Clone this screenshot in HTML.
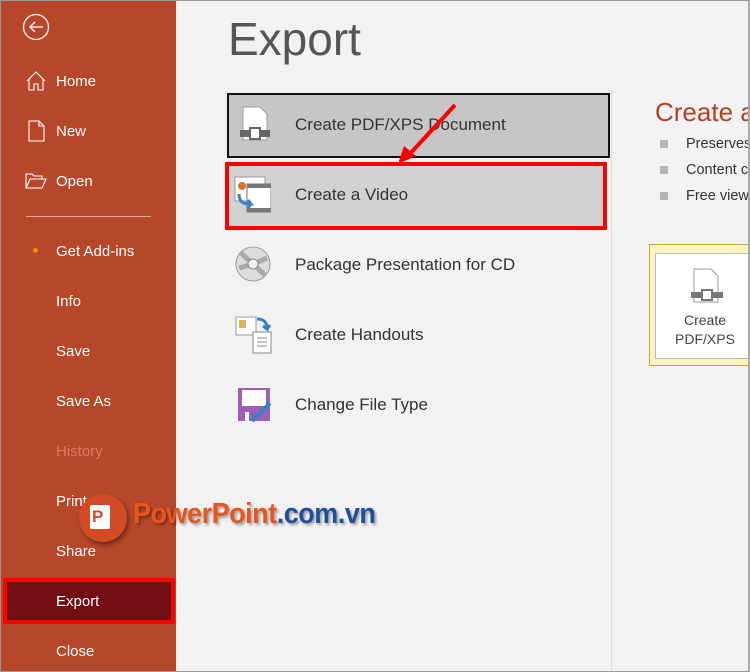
<!DOCTYPE html>
<html><head><meta charset="utf-8"><style>
*{margin:0;padding:0;box-sizing:border-box}
body{width:750px;height:672px;overflow:hidden;background:#f2f2f2;font-family:"Liberation Sans",sans-serif;position:relative}
.frame{position:absolute;left:0;top:0;width:750px;height:672px;border:1px solid #999;border-right:2px solid #aaa;pointer-events:none;z-index:9}
.side{position:absolute;left:0;top:0;width:176px;height:672px;background:#b7472a;color:#fff}
.item{position:absolute;left:56px;font-size:15px;color:#fff}
.ico{position:absolute}
.main{position:absolute;left:176px;top:0;right:0;bottom:0}
.t{position:absolute;font-size:17px;color:#333}
</style></head><body>
<div class="side">
<svg class="ico" style="left:22px;top:13px" width="28" height="28" viewBox="0 0 28 28"><circle cx="14" cy="14" r="12.5" fill="none" stroke="#fff" stroke-width="1.3"/><path d="M8 14h13M13 9l-5 5 5 5" fill="none" stroke="#fff" stroke-width="1.3"/></svg>
<svg class="ico" style="left:26px;top:71px" width="20" height="20" viewBox="0 0 20 20"><path d="M1 10L10 1l9 9M3 8v11h5v-6h4v6h5V8" fill="none" stroke="#fff" stroke-width="1.1"/></svg>
<div class="item" style="top:73px">Home</div>
<svg class="ico" style="left:28px;top:120px" width="17" height="22" viewBox="0 0 17 22"><path d="M1 1h10l5 5v15H1z M11 1v5h5" fill="none" stroke="#fff" stroke-width="1.1"/></svg>
<div class="item" style="top:123px">New</div>
<svg class="ico" style="left:25px;top:173px" width="22" height="16" viewBox="0 0 22 16"><path d="M1 15V1h6l2 2h8v3 M1 15l4-9h16l-4 9z" fill="none" stroke="#fff" stroke-width="1.1"/></svg>
<div class="item" style="top:173px">Open</div>
<div style="position:absolute;left:26px;top:216px;width:125px;height:1px;background:#e8a590"></div>
<div style="position:absolute;left:33px;top:248px;width:5px;height:5px;border-radius:50%;background:#f08a00"></div>
<div class="item" style="top:243px">Get Add-ins</div>
<div class="item" style="top:293px">Info</div>
<div class="item" style="top:343px">Save</div>
<div class="item" style="top:393px">Save As</div>
<div class="item" style="top:443px;color:#db7a63">History</div>
<div class="item" style="top:493px">Print</div>
<div class="item" style="top:543px">Share</div>
<div style="position:absolute;left:3px;top:578px;width:172px;height:46px;background:#730d14;border:4px solid #f00"></div>
<div class="item" style="top:593px">Export</div>
<div class="item" style="top:643px">Close</div>
</div>
<div class="main">
<div style="position:absolute;left:52px;top:12px;font-size:46px;color:#555;font-weight:300">Export</div>
<div style="position:absolute;left:51px;top:93px;width:383px;height:65px;background:#c6c6c6;border:2px solid #111"></div>
<svg class="ico" style="left:64px;top:106px" width="30" height="36" viewBox="0 0 30 36"><path d="M3 1h17l7 7v26H3z" fill="#fff" stroke="#999"/><rect x="0" y="24" width="30" height="7" fill="#666"/><rect x="10" y="22" width="10" height="11" fill="#fff" stroke="#666" stroke-width="2"/></svg>
<div class="t" style="left:119px;top:115px">Create PDF/XPS Document</div>
<div style="position:absolute;left:435px;top:90px;width:1px;height:582px;background:#ddd"></div>
<div style="position:absolute;left:49px;top:162px;width:382px;height:68px;background:#d2d2d2;border:4px solid #f00"></div>
<svg class="ico" style="left:57px;top:176px" width="38" height="38" viewBox="0 0 38 38"><rect x="2" y="1" width="30" height="24" fill="#fff" stroke="#999"/><circle cx="9" cy="10" r="4" fill="#e07030"/><rect x="14" y="8" width="24" height="28" fill="#fff" stroke="#777"/><rect x="14" y="8" width="24" height="4" fill="#777"/><rect x="14" y="32" width="24" height="4" fill="#777"/><path d="M6 18c0 8 4 10 12 10l-3-4m3 4l-3 4" fill="none" stroke="#3b7fc4" stroke-width="3"/></svg>
<div class="t" style="left:119px;top:185px">Create a Video</div>
<svg class="ico" style="left:59px;top:246px" width="36" height="36" viewBox="0 0 36 36"><circle cx="18" cy="18" r="17" fill="#ddd" stroke="#999"/><path d="M18 18L6 7M18 18L30 29M18 18L4 22M18 18l14-6" stroke="#aaa" stroke-width="5"/><circle cx="18" cy="18" r="5" fill="#f2f2f2" stroke="#888"/></svg>
<div class="t" style="left:119px;top:255px">Package Presentation for CD</div>
<svg class="ico" style="left:59px;top:316px" width="38" height="38" viewBox="0 0 38 38"><rect x="1" y="1" width="20" height="18" fill="#fff" stroke="#999"/><rect x="4" y="4" width="7" height="8" fill="#e0b060"/><rect x="18" y="16" width="18" height="21" fill="#fff" stroke="#888"/><path d="M22 22h10M22 26h10M22 30h10" stroke="#888"/><path d="M22 3c8 0 10 4 10 10l-4-3m4 3l3-4" fill="none" stroke="#3b7fc4" stroke-width="3"/></svg>
<div class="t" style="left:119px;top:325px">Create Handouts</div>
<svg class="ico" style="left:61px;top:387px" width="36" height="36" viewBox="0 0 36 36"><rect x="1" y="1" width="32" height="33" fill="#9b5fb8"/><rect x="5" y="3" width="24" height="16" fill="#fff"/><rect x="8" y="25" width="4" height="9" fill="#fff"/><path d="M15 34l18-18" stroke="#3b7fc4" stroke-width="4"/></svg>
<div class="t" style="left:119px;top:395px">Change File Type</div>
<svg style="position:absolute;left:215px;top:102px" width="70" height="64"><path d="M64 3L16 55" stroke="#f00" stroke-width="4"/><path d="M7 62l6-18 12 10z" fill="#f00"/></svg>
<div style="position:absolute;left:479px;top:97px;font-size:26px;color:#b0402a;white-space:nowrap">Create a</div>
<div style="position:absolute;left:484px;top:140px;width:8px;height:8px;background:#b5b5b5"></div>
<div class="t" style="left:510px;top:136px;font-size:14.5px">Preserves</div>
<div style="position:absolute;left:484px;top:166px;width:8px;height:8px;background:#b5b5b5"></div>
<div class="t" style="left:510px;top:162px;font-size:14.5px">Content c</div>
<div style="position:absolute;left:484px;top:192px;width:8px;height:8px;background:#b5b5b5"></div>
<div class="t" style="left:510px;top:188px;font-size:14.5px">Free view</div>
<div style="position:absolute;left:473px;top:244px;width:110px;height:122px;background:#fcf4bf;border:1px solid #c8a830"></div>
<div style="position:absolute;left:479px;top:253px;width:100px;height:106px;background:#fff;border:1px solid #bbb"></div>
<svg class="ico" style="left:515px;top:268px" width="32" height="36" viewBox="0 0 32 36"><path d="M3 1h17l7 7v26H3z" fill="#fff" stroke="#999"/><rect x="0" y="24" width="32" height="6" fill="#777"/><rect x="11" y="22" width="10" height="10" fill="#fff" stroke="#777" stroke-width="2"/></svg>
<div style="position:absolute;left:479px;top:311px;width:100px;text-align:center;font-size:14px;color:#444;line-height:19px">Create<br>PDF/XPS</div>
</div>
<div style="position:absolute;left:79px;top:494px;width:48px;height:48px;border-radius:50%;background:#d24a26;box-shadow:2px 3px 5px rgba(0,0,0,.4)"></div>
<div style="position:absolute;left:90px;top:505px;width:20px;height:24px;background:#fff;border-radius:2px"></div>
<div style="position:absolute;left:92px;top:507px;font-size:17px;font-weight:bold;color:#d24a26">P</div>
<div style="position:absolute;left:133px;top:498px;font-size:29px;font-weight:bold;letter-spacing:-0.5px;text-shadow:2px 2px 3px rgba(0,0,0,.35);white-space:nowrap;transform:scaleX(.93);transform-origin:left"><span style="color:#e8561e">PowerPoint</span><span style="color:#1f4f9c">.com.vn</span></div>
<div class="frame"></div>
</body></html>
